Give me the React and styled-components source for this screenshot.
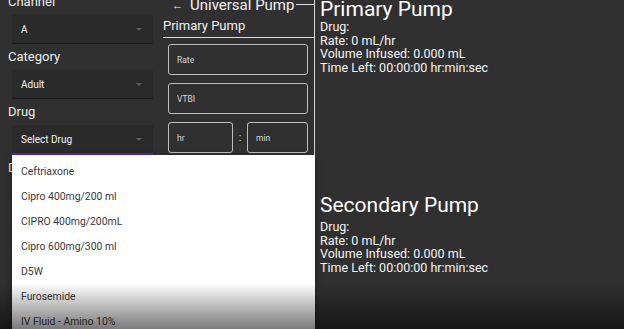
import React from 'react'
import styled, { createGlobalStyle } from 'styled-components'

const Global = createGlobalStyle`
  html, body { margin: 0; padding: 0; background: #303030; }
  body { font-family: Roboto, "Liberation Sans", sans-serif; }
`

const Page = styled.div`
  position: relative;
  height: 329px;
  overflow: hidden;
  display: grid;
  grid-template-columns: 158px 157px 1fr;
  background: #303030;
  color: #fff;
`

const LeftCol = styled.div`
  padding: 0 5px 0 12px;
  margin-top: -6px;
  display: flex;
  flex-direction: column;
  gap: 5px;
`

const Group = styled.div`
  display: flex;
  flex-direction: column;
`

const Label = styled.div`
  font-size: 13px;
  line-height: 16px;
  color: #ececec;
  margin: 0 0 5px -4px;
`

const Select = styled.div`
  height: 28px;
  background: #2a2a2a;
  border-bottom: ${p => (p.$active ? '2px solid #5225c2' : '1px solid #1d1d1d')};
  display: flex;
  align-items: center;
  justify-content: space-between;
  padding: 0 11px 0 9px;
  font-size: 10px;
  color: #f4f4f4;
`

const Caret = styled.span`
  width: 0;
  height: 0;
  border-left: 3px solid transparent;
  border-right: 3px solid transparent;
  border-top: 3px solid #5f5f5f;
`

const MidCol = styled.div`
  border-right: 1px solid #d8d8d8;
  display: flex;
  flex-direction: column;
`

const Header = styled.div`
  display: flex;
  align-items: center;
  margin-top: -4px;
  height: 18px;
  padding-left: 14px;
  font-size: 15px;
  color: #f2f2f2;
`

const Back = styled.span`
  font-size: 11px;
  margin-right: 7px;
`

const HeaderLine = styled.span`
  flex: 1;
  height: 1px;
  background: #e0e0e0;
  margin: 0 0 2px 2px;
`

const SubTitle = styled.div`
  margin: 4px 0 0 5px;
  padding-bottom: 3px;
  font-size: 13px;
  line-height: 16px;
  color: #f0f0f0;
  border-bottom: 1px solid #dcdcdc;
`

const Form = styled.div`
  display: flex;
  flex-direction: column;
  gap: 8px;
  padding: 6px 6px 0 10px;
`

const Row = styled.div`
  display: flex;
  align-items: center;
`

const Field = styled.div`
  flex: ${p => (p.$basis ? `0 0 ${p.$basis}px` : 'none')};
  box-sizing: border-box;
  height: 31px;
  border: 1px solid #bdbdbd;
  border-radius: 3px;
  display: flex;
  align-items: center;
  padding-left: 8px;
  font-size: 8.5px;
  color: #d8d8d8;
`

const Colon = styled.span`
  width: 14px;
  text-align: center;
  font-size: 11px;
  color: #ccc;
`

const RightCol = styled.div`
  padding-left: 5px;
  display: flex;
  flex-direction: column;
`

const Pump = styled.section`
  margin-top: ${p => p.$top || 0}px;
`

const PumpTitle = styled.div`
  font-size: 21px;
  line-height: ${p => p.$lh || 22}px;
  color: #fff;
`

const Stat = styled.div`
  font-size: 12.5px;
  line-height: 13.7px;
  color: #f5f5f5;
`

const Menu = styled.div`
  position: absolute;
  left: 12px;
  top: 155px;
  width: 303px;
  bottom: 0;
  background: #fff;
  padding-top: 4px;
  box-shadow: 0 2px 6px rgba(0, 0, 0, 0.4);
`

const MenuItem = styled.div`
  height: 25px;
  line-height: 25px;
  padding-left: 9px;
  font-size: 10.4px;
  color: #3a3a3a;
`

const Fade = styled.div`
  position: absolute;
  left: 0;
  right: 0;
  bottom: 0;
  height: 46px;
  background: linear-gradient(to bottom, rgba(0, 0, 0, 0), rgba(0, 0, 0, 0.52));
  pointer-events: none;
`

const drugs = [
  'Ceftriaxone',
  'Cipro 400mg/200 ml',
  'CIPRO 400mg/200mL',
  'Cipro 600mg/300 ml',
  'D5W',
  'Furosemide',
  'IV Fluid - Amino 10%',
]

function PumpInfo({ title, top, lh }) {
  return (
    <Pump $top={top}>
      <PumpTitle $lh={lh}>{title}</PumpTitle>
      <Stat>Drug:</Stat>
      <Stat>Rate: 0 mL/hr</Stat>
      <Stat>Volume Infused: 0.000 mL</Stat>
      <Stat>Time Left: 00:00:00 hr:min:sec</Stat>
    </Pump>
  )
}

export default function App() {
  return (
    <>
      <Global />
      <Page>
        <LeftCol>
          <Group>
            <Label>Channel</Label>
            <Select>A<Caret /></Select>
          </Group>
          <Group>
            <Label>Category</Label>
            <Select>Adult<Caret /></Select>
          </Group>
          <Group>
            <Label>Drug</Label>
            <Select $active>Select Drug<Caret /></Select>
          </Group>
          <Group>
            <Label>Dose</Label>
          </Group>
        </LeftCol>

        <MidCol>
          <Header>
            <Back>←</Back>
            Universal Pump
            <HeaderLine />
          </Header>
          <SubTitle>Primary Pump</SubTitle>
          <Form>
            <Field>Rate</Field>
            <Field>VTBI</Field>
            <Row>
              <Field $basis={65}>hr</Field>
              <Colon>:</Colon>
              <Field $basis={61}>min</Field>
            </Row>
          </Form>
        </MidCol>

        <RightCol>
          <PumpInfo title="Primary Pump" top={-2} lh={22} />
          <PumpInfo title="Secondary Pump" top={115} lh={30} />
        </RightCol>

        <Menu>
          {drugs.map(d => (
            <MenuItem key={d}>{d}</MenuItem>
          ))}
        </Menu>
        <Fade />
      </Page>
    </>
  )
}
